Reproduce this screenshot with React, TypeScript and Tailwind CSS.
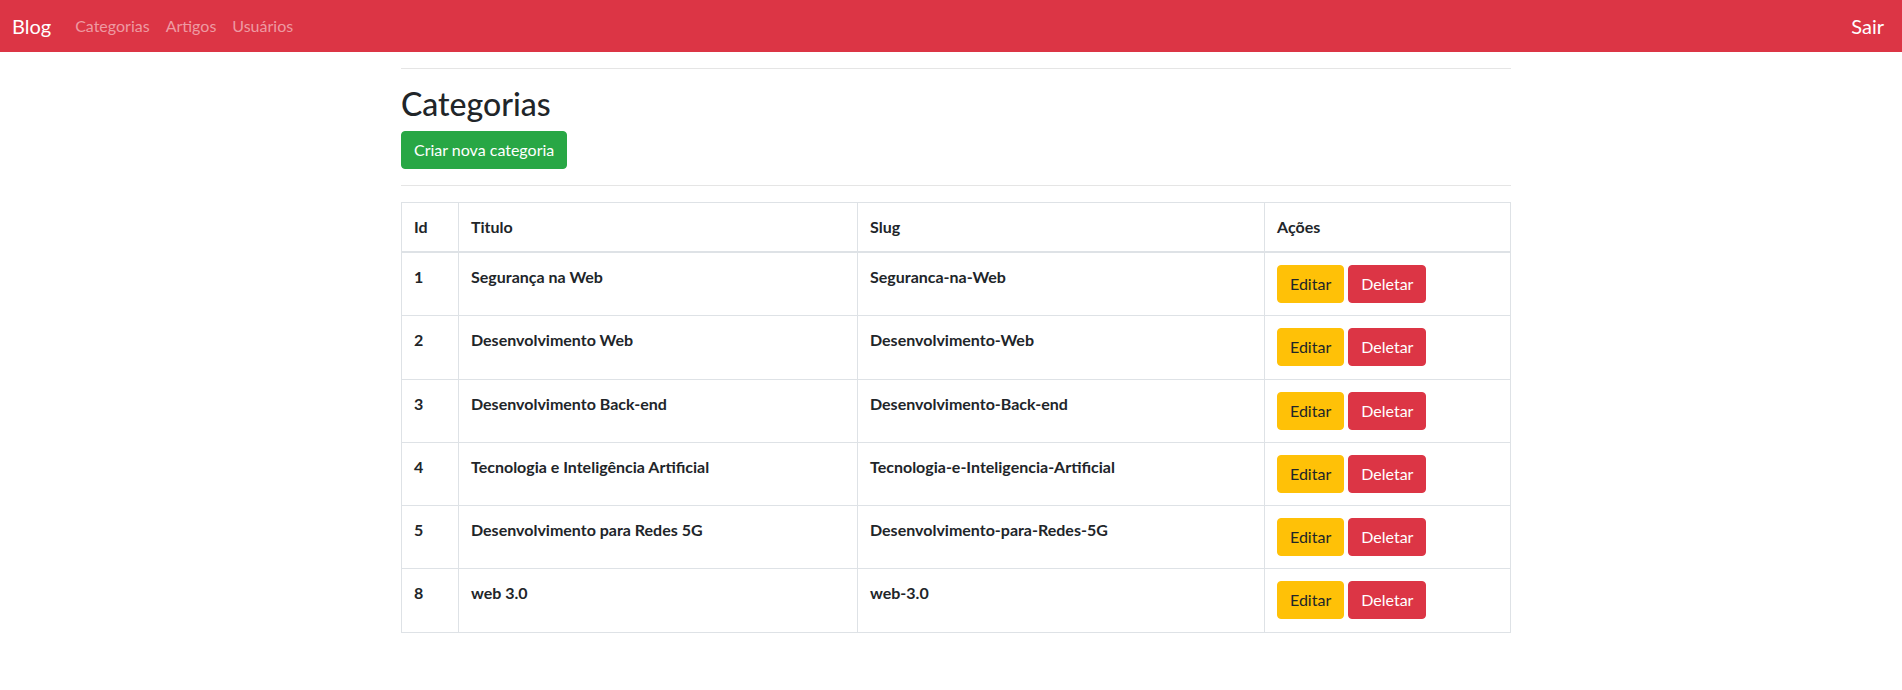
import React from "react";

type Categoria = {
  id: number;
  titulo: string;
  slug: string;
};

const categorias: Categoria[] = [
  { id: 1, titulo: "Segurança na Web", slug: "Seguranca-na-Web" },
  { id: 2, titulo: "Desenvolvimento Web", slug: "Desenvolvimento-Web" },
  { id: 3, titulo: "Desenvolvimento Back-end", slug: "Desenvolvimento-Back-end" },
  { id: 4, titulo: "Tecnologia e Inteligência Artificial", slug: "Tecnologia-e-Inteligencia-Artificial" },
  { id: 5, titulo: "Desenvolvimento para Redes 5G", slug: "Desenvolvimento-para-Redes-5G" },
  { id: 8, titulo: "web 3.0", slug: "web-3.0" },
];

const font = "font-['Segoe_UI','Lato','Liberation_Sans',sans-serif]";

const App: React.FC = () => {
  return (
    <div className={`min-h-screen bg-white text-[#212529] ${font}`}>
      {/* Navbar */}
      <nav className="h-[52px] bg-[#dc3545] flex items-center justify-between pl-3 pr-[18px]">
        <div className="flex items-center">
          <a className="text-white text-[20px] leading-[30px] mr-4">Blog</a>
          <a className="px-2 text-[16px] text-[#ee9aa2]">Categorias</a>
          <a className="px-2 text-[16px] text-[#ee9aa2]">Artigos</a>
          <a className="px-2 text-[16px] text-[#ee9aa2]">Usuários</a>
        </div>
        <a className="text-white text-[20px] leading-[30px]">Sair</a>
      </nav>

      <main className="w-[1110px] ml-[401px]">
        <hr className="mt-4 mb-4 border-t border-[#e5e5e5]" />
        <h2 className="text-[32px] leading-[38px] font-medium mb-2">Categorias</h2>
        <button className="bg-[#28a745] text-white text-[16px] leading-[24px] px-3 py-[6px] rounded border border-[#28a745]">
          Criar nova categoria
        </button>
        <hr className="mt-4 mb-4 border-t border-[#e5e5e5]" />

        <table className="w-full border-collapse border border-[#dee2e6] text-[16px] leading-[24px]">
          <thead>
            <tr>
              <th className="w-[57px] text-left font-bold p-3 border border-[#dee2e6] border-b-2">Id</th>
              <th className="w-[399px] text-left font-bold p-3 border border-[#dee2e6] border-b-2">Titulo</th>
              <th className="w-[407px] text-left font-bold p-3 border border-[#dee2e6] border-b-2">Slug</th>
              <th className="text-left font-bold p-3 border border-[#dee2e6] border-b-2">Ações</th>
            </tr>
          </thead>
          <tbody>
            {categorias.map((c) => (
              <tr key={c.id}>
                <th className="text-left align-top font-bold p-3 border border-[#dee2e6]">{c.id}</th>
                <th className="text-left align-top font-bold p-3 border border-[#dee2e6]">{c.titulo}</th>
                <th className="text-left align-top font-bold p-3 border border-[#dee2e6]">{c.slug}</th>
                <td className="align-top p-3 border border-[#dee2e6]">
                  <div className="flex items-start gap-1 h-[38.3px]">
                    <button className="bg-[#ffc107] text-[#212529] px-3 py-[6px] rounded border border-[#ffc107]">
                      Editar
                    </button>
                    <button className="bg-[#dc3545] text-white px-3 py-[6px] rounded border border-[#dc3545]">
                      Deletar
                    </button>
                  </div>
                </td>
              </tr>
            ))}
          </tbody>
        </table>
      </main>
    </div>
  );
};

export default App;
